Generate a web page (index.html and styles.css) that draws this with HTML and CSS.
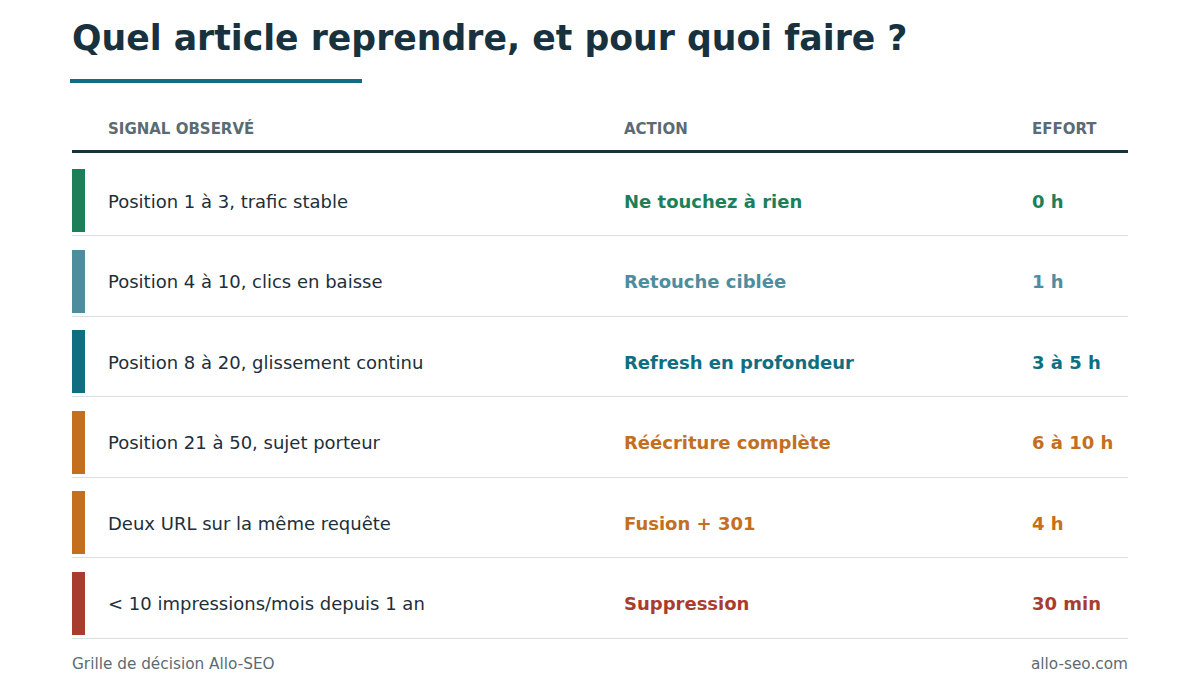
FILE: index.html
```html
<!DOCTYPE html>
<html lang="fr">
<head>
<meta charset="utf-8">
<title>Quel article reprendre</title>
<link rel="stylesheet" href="styles.css">
</head>
<body>
<main class="page">
  <h1 class="title">Quel article reprendre, et pour quoi faire ?</h1>
  <div class="title-rule"></div>

  <div class="table">
    <div class="thead">
      <span></span>
      <span class="th signal-h">SIGNAL OBSERVÉ</span>
      <span class="th">ACTION</span>
      <span class="th">EFFORT</span>
    </div>
    <div class="tbody">
      <div class="row green">
        <span class="bar"></span>
        <span class="signal">Position 1 à 3, trafic stable</span>
        <span class="action">Ne touchez à rien</span>
        <span class="effort">0 h</span>
      </div>
      <div class="row sky">
        <span class="bar"></span>
        <span class="signal">Position 4 à 10, clics en baisse</span>
        <span class="action">Retouche ciblée</span>
        <span class="effort">1 h</span>
      </div>
      <div class="row teal">
        <span class="bar"></span>
        <span class="signal">Position 8 à 20, glissement continu</span>
        <span class="action">Refresh en profondeur</span>
        <span class="effort">3 à 5 h</span>
      </div>
      <div class="row orange">
        <span class="bar"></span>
        <span class="signal">Position 21 à 50, sujet porteur</span>
        <span class="action">Réécriture complète</span>
        <span class="effort">6 à 10 h</span>
      </div>
      <div class="row orange">
        <span class="bar"></span>
        <span class="signal">Deux URL sur la même requête</span>
        <span class="action">Fusion + 301</span>
        <span class="effort">4 h</span>
      </div>
      <div class="row red">
        <span class="bar"></span>
        <span class="signal">&lt; 10 impressions/mois depuis 1 an</span>
        <span class="action">Suppression</span>
        <span class="effort">30 min</span>
      </div>
    </div>
  </div>

  <footer class="footer">
    <span>Grille de décision Allo-SEO</span>
    <span>allo-seo.com</span>
  </footer>
</main>
</body>
</html>
```

FILE: styles.css
```css
* { box-sizing: border-box; }

html, body {
  margin: 0;
  padding: 0;
  background: #ffffff;
}

body {
  font-family: "DejaVu Sans", "Liberation Sans", sans-serif;
  color: #1c2f3a;
}

.page {
  width: 1200px;
  height: 700px;
  padding: 16px 72px 0 72px;
}

.title {
  margin: 0;
  font-size: 34.7px;
  line-height: 44px;
  font-weight: bold;
  color: #17323e;
}

.title-rule {
  margin: 19px 0 0 -2px;
  width: 292px;
  height: 4px;
  background: #0f6f81;
}

.table {
  width: 1056px;
}

.thead,
.row {
  display: grid;
  grid-template-columns: 13px 539px 408px 1fr;
  align-items: center;
}

.signal-h,
.row > .signal {
  padding-left: 23px;
}

.thead {
  margin-top: 36px;
  padding-bottom: 11px;
  border-bottom: 3px solid #17323e;
}

.th {
  font-family: "DejaVu Sans", sans-serif;
  font-weight: bold;
  font-size: 15px;
  line-height: 20px;
  color: #5a6b73;
}

.tbody {
  padding-top: 2.5px;
}

.row {
  padding: 13.5px 0 3px 0;
  border-bottom: 1px solid #d8e0e4;
}

.bar {
  display: block;
  width: 13px;
  height: 63px;
}

.signal,
.action,
.effort {
  font-size: 18px;
  padding-top: 1px;
}

.signal {
  color: #1c2f3a;
}

.action,
.effort {
  font-weight: bold;
}

.green .bar { background: #1c7f59; }
.green .action, .green .effort { color: #1c7f59; }

.sky .bar { background: #4e8d9e; }
.sky .action, .sky .effort { color: #4e8d9e; }

.teal .bar { background: #0f6f81; }
.teal .action, .teal .effort { color: #0f6f81; }

.orange .bar { background: #c46f1e; }
.orange .action, .orange .effort { color: #c46f1e; }

.red .bar { background: #a83d2f; }
.red .action, .red .effort { color: #a83d2f; }

.footer {
  width: 1056px;
  margin-top: 17px;
  display: flex;
  justify-content: space-between;
  font-size: 15.3px;
  line-height: 17px;
  color: #5b6b73;
}
```
